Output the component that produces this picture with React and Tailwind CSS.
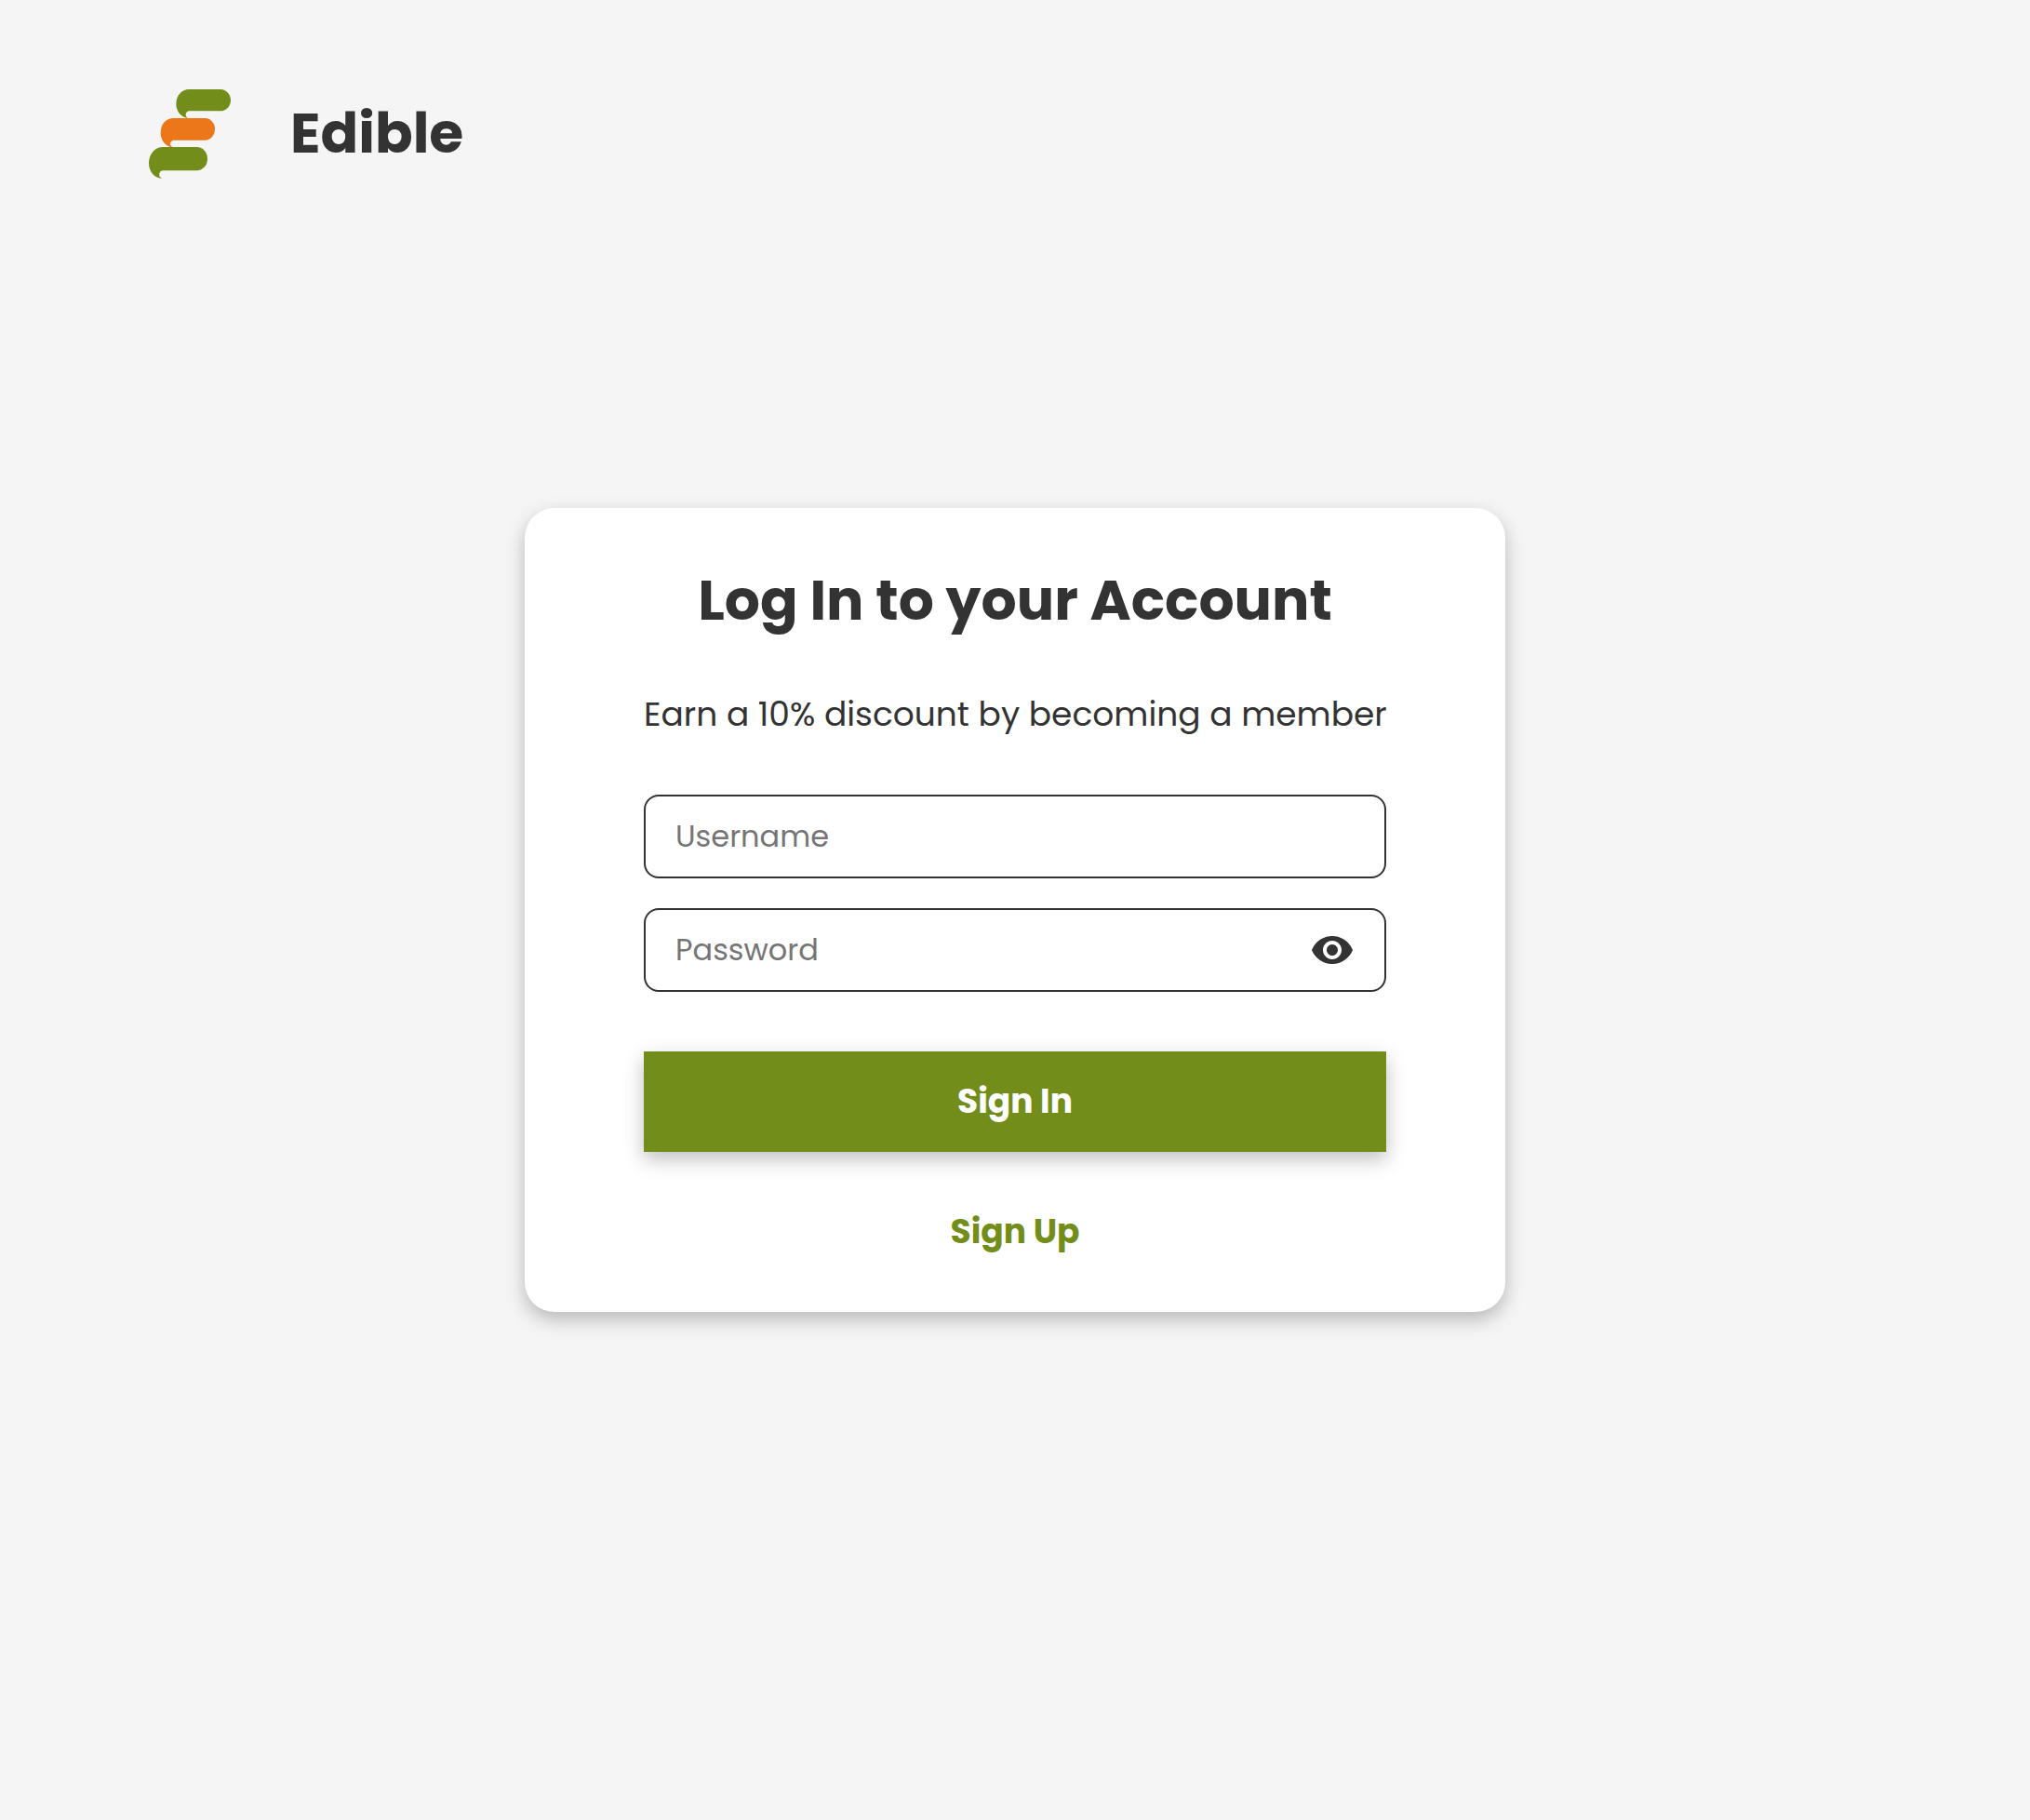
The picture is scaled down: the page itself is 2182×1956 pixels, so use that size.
import { useState } from "react";

function Logo() {
  return (
    <svg viewBox="0 0 264 288" className="h-24 w-22 shrink-0" aria-hidden="true">
      <path
        fill="#728d1a"
        d="M130 0H230A34 35 0 0 1 230 70H132C122 70 117 78 120 87L125 93C104 89 88 71 88 47C88 20 106 0 130 0Z"
      />
      <path
        fill="#ec761a"
        d="M79 93H181A32 35.500 0 0 1 181 164H82C72 164 67 172 70 181L76 187C54 184 38 164 38 140C38 112 56 93 79 93Z"
      />
      <path
        fill="#728d1a"
        d="M46 186H155A34 38 0 0 1 155 262H46C36 262 31 272 35 281L42 287C17 287 0 264 0 238C0 208 20 186 46 186Z"
      />
    </svg>
  );
}

function EyeIcon() {
  return (
    <svg viewBox="0 0 24 24" className="size-12" fill="currentColor" aria-hidden="true">
      <path d="M12 4.5C7 4.5 2.73 7.61 1 12c1.73 4.39 6 7.5 11 7.5s9.27-3.11 11-7.5c-1.73-4.39-6-7.5-11-7.5zM12 17c-2.76 0-5-2.24-5-5s2.24-5 5-5 5 2.24 5 5-2.24 5-5 5zm0-8c-1.66 0-3 1.34-3 3s1.34 3 3 3 3-1.34 3-3-1.34-3-3-3z" />
    </svg>
  );
}

const fieldClass =
  "flex h-[90px] items-center rounded-2xl border-2 border-[#333333] px-8 focus-within:outline-2 focus-within:outline-[#728d1a]";
const inputClass =
  "h-full min-w-0 flex-1 bg-transparent text-[32px] leading-12 outline-none placeholder:text-[#757575]";

export default function App() {
  const [visible, setVisible] = useState(false);

  return (
    <div className="grid min-h-screen grid-rows-[1fr_auto_1fr] bg-[#f5f5f5] font-['Poppins','Inter',sans-serif] text-[#333333]">
      <header className="flex items-start gap-16 px-40 pt-24">
        <Logo />
        <span className="text-[60px] leading-[94px] font-bold">Edible</span>
      </header>

      <main className="flex justify-center">
        <form
          className="flex w-full max-w-[1054px] flex-col rounded-4xl bg-white px-32 pt-[54px] pb-[59px] shadow-[0_8px_20px_rgba(0,0,0,0.25)]"
          onSubmit={(event) => event.preventDefault()}
        >
          <h1 className="text-center text-[60px] leading-[90px] font-bold whitespace-nowrap">
            Log In to your Account
          </h1>
          <p className="mt-[51px] text-center text-[36px] leading-[54px] whitespace-nowrap">
            Earn a 10% discount by becoming a member
          </p>

          <div className="mt-[59px] flex flex-col gap-8">
            <div className={fieldClass}>
              <input className={inputClass} type="text" placeholder="Username" aria-label="Username" />
            </div>
            <div className={fieldClass}>
              <input
                className={inputClass}
                type={visible ? "text" : "password"}
                placeholder="Password"
                aria-label="Password"
              />
              <button
                type="button"
                aria-label={visible ? "Hide password" : "Show password"}
                onClick={() => setVisible(!visible)}
              >
                <EyeIcon />
              </button>
            </div>
          </div>

          <button
            type="submit"
            className="mt-16 h-[108px] bg-[#728d1a] text-[36px] leading-[54px] font-bold text-white shadow-[0_8px_20px_rgba(0,0,0,0.25)]"
          >
            Sign In
          </button>
          <a
            href="#sign-up"
            className="mt-[59px] self-center text-[36px] leading-[54px] font-bold text-[#728d1a]"
          >
            Sign Up
          </a>
        </form>
      </main>
    </div>
  );
}
